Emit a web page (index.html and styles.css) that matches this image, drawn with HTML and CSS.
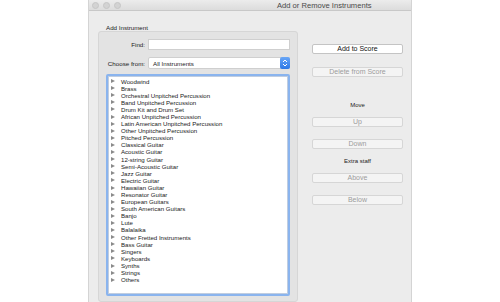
FILE: index.html
```html
<!DOCTYPE html>
<html>
<head>
    <meta charset="UTF-8">
    <title>Add or Remove Instruments</title>
    <link rel="stylesheet" href="styles.css">
</head>
<body>
    <!-- window -->
    <div class="window">
        <div class="titlebar">
            <span class="light"></span>
            <span class="light"></span>
            <span class="light"></span>
            <span class="title">Add or Remove Instruments</span>
        </div>

        <div class="content">
            <!-- left: instrument picker -->
            <div class="group">
                <div class="group_label">Add Instrument</div>
                <div class="group_box">
                    <div class="form_row">
                        <label>Find:</label>
                        <div class="field"></div>
                    </div>
                    <div class="form_row">
                        <label>Choose from:</label>
                        <div class="select">
                            <span>All Instruments</span>
                            <span class="stepper">
                                <svg width="6" height="8" viewBox="0 0 6 8"><path d="M1 3 L3 1 L5 3 M1 5 L3 7 L5 5" fill="none" stroke="#fff" stroke-width="1"/></svg>
                            </span>
                        </div>
                    </div>
                    <div class="list_ring">
                        <ul class="tree">
                            <li>Woodwind</li>
                            <li>Brass</li>
                            <li>Orchestral Unpitched Percussion</li>
                            <li>Band Unpitched Percussion</li>
                            <li>Drum Kit and Drum Set</li>
                            <li>African Unpitched Percussion</li>
                            <li>Latin American Unpitched Percussion</li>
                            <li>Other Unpitched Percussion</li>
                            <li>Pitched Percussion</li>
                            <li>Classical Guitar</li>
                            <li>Acoustic Guitar</li>
                            <li>12-string Guitar</li>
                            <li>Semi-Acoustic Guitar</li>
                            <li>Jazz Guitar</li>
                            <li>Electric Guitar</li>
                            <li>Hawaiian Guitar</li>
                            <li>Resonator Guitar</li>
                            <li>European Guitars</li>
                            <li>South American Guitars</li>
                            <li>Banjo</li>
                            <li>Lute</li>
                            <li>Balalaika</li>
                            <li>Other Fretted Instruments</li>
                            <li>Bass Guitar</li>
                            <li>Singers</li>
                            <li>Keyboards</li>
                            <li>Synths</li>
                            <li>Strings</li>
                            <li>Others</li>
                        </ul>
                    </div>
                </div>
            </div>

            <!-- right: buttons -->
            <div class="actions">
                <div class="btn btn_add">Add to Score</div>
                <div class="btn btn_off btn_delete">Delete from Score</div>
                <div class="caption cap_move">Move</div>
                <div class="btn btn_off btn_up">Up</div>
                <div class="btn btn_off btn_down">Down</div>
                <div class="caption cap_extra">Extra staff</div>
                <div class="btn btn_off btn_above">Above</div>
                <div class="btn btn_off btn_below">Below</div>
            </div>
        </div>
    </div>
</body>
</html>
```

FILE: styles.css
```css
/* base */
*{margin:0;padding:0;box-sizing:border-box;}
html,body{width:100%;height:100%;}
body{background:#fff;font-family:"Liberation Sans",Arial,sans-serif;overflow:hidden;}

/* window */
.window{
    width:324px;height:302px;margin-left:88px;
    background:#ececec;
    border-left:1px solid #d4d4d4;border-right:1px solid #d4d4d4;
    display:flex;flex-direction:column;
    overflow:hidden;
}
.titlebar{
    height:11px;flex:none;
    background:linear-gradient(#ececec,#dcdcdc);
    border-bottom:1px solid #c8c8c8;
    display:flex;align-items:center;
    padding-left:3px;gap:4px;
}
.light{width:7px;height:7px;border-radius:50%;background:#d3d3d3;border:1px solid #c6c6c6;}
.title{font-size:7.6px;color:#4a4a4a;margin-left:152px;white-space:nowrap;}

.content{flex:1;display:flex;}

/* group box */
.group{width:200px;margin-left:9px;margin-top:13px;display:flex;flex-direction:column;}
.group_label{font-size:6.2px;line-height:7px;height:7px;color:#222;padding-left:8px;}
.group_box{
    flex:1;height:290px;
    background:#e3e3e3;border:1px solid #d6d6d6;border-radius:3px;
    padding:7px 7px 0 7px;
    display:flex;flex-direction:column;
}
.form_row{display:grid;grid-template-columns:39px 1fr;column-gap:3px;align-items:center;margin-bottom:7px;}
.form_row label{font-size:6.2px;color:#222;text-align:right;white-space:nowrap;}
.form_row + .form_row{margin-bottom:5px;}
.field{height:11px;background:#fff;border:1px solid #cfcfcf;}
.select{
    height:12px;background:#fff;border:1px solid #cfcfcf;border-radius:2px;
    display:flex;align-items:center;justify-content:space-between;
    font-size:6.2px;color:#222;padding-left:4px;
}
.stepper{
    width:10px;height:12px;margin-right:-1px;
    background:linear-gradient(#6aa7f7,#2d78e6);border-radius:2px;
    display:flex;align-items:center;justify-content:center;
}

/* instrument list */
.list_ring{height:222px;border:2px solid #8ab4ee;border-radius:2px;background:#fff;}
.tree{list-style:none;border:1px solid #c0cde0;height:100%;padding-top:0.5px;}
.tree li{
    font-size:6.1px;line-height:7.1px;height:7.1px;color:#222;
    padding-left:12px;position:relative;white-space:nowrap;
}
.tree li::before{
    content:"";position:absolute;left:1.5px;top:1.6px;
    border-left:4px solid #8a8a8a;border-top:2px solid transparent;border-bottom:2px solid transparent;
}

/* buttons */
.actions{width:91px;margin-left:14px;display:flex;flex-direction:column;}
.btn{
    height:10px;font-size:7px;line-height:8px;text-align:center;
    background:#fff;border:1px solid #c4c4c4;border-radius:2px;color:#111;
}
.btn_off{background:#f4f4f4;border-color:#d6d6d6;color:#9c9c9c;}
.caption{font-size:6px;line-height:8px;height:8px;text-align:center;color:#222;}
.btn_add{margin-top:33px;}
.btn_delete{margin-top:13px;}
.cap_move{margin-top:24px;}
.btn_up{margin-top:8px;}
.btn_down{margin-top:12px;}
.cap_extra{margin-top:8px;}
.btn_above{margin-top:8px;}
.btn_below{margin-top:12px;}
```
